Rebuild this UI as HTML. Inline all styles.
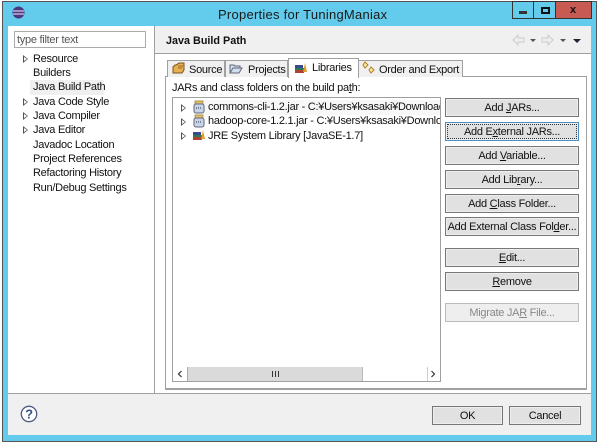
<!DOCTYPE html>
<html><head><meta charset="utf-8"><style>
html,body{margin:0;padding:0;width:600px;height:444px;overflow:hidden;background:#fff}
*{box-sizing:border-box}
#p{position:relative;width:600px;height:444px;font:11px "Liberation Sans","Noto Sans CJK JP",sans-serif;letter-spacing:-.27px;color:#111;filter:blur(.25px)}
.a,.t,.b,.tab,svg{position:absolute}
.t{white-space:nowrap;line-height:14px}
.b{left:445px;width:134px;height:19px;background:#e1e1e1;border:1px solid #777;box-shadow:inset 0 0 0 1px #eee;text-align:center;line-height:18px;white-space:nowrap}
u{text-decoration:underline}
.tab{background:#f0f0f0;border:1px solid #a0a0a0;border-bottom:0;height:17px;top:60px;line-height:16px;white-space:nowrap}
.ar{position:absolute;width:0;height:0;border-left:5px solid #555;border-top:4px solid transparent;border-bottom:4px solid transparent}
.ar:after{content:"";position:absolute;left:-4px;top:-2px;border-left:3px solid #fff;border-top:2px solid transparent;border-bottom:2px solid transparent}
</style></head><body><div id="p">
<div class="a" style="left:2px;top:1px;width:595px;height:441px;background:#63cbec;border:1px solid #555"></div>
<div class="a" style="left:8px;top:26px;width:583px;height:409px;background:#f0f0f0"></div>
<svg style="left:10px;top:4px" width="18" height="18" viewBox="0 0 18 18"><circle cx="8.5" cy="8.5" r="6" fill="#4b3a80"/><path d="M3 7h11M3 10h11" stroke="#d8c8e8" stroke-width="1.2"/></svg>
<div class="t" style="left:218px;top:7px;font-size:13px;line-height:16px;width:170px;letter-spacing:.25px;color:#1a1a1a">Properties for TuningManiax</div>
<div class="a" style="left:512px;top:1px;width:22px;height:18px;border:1px solid #333;background:#63cbec"></div>
<div class="a" style="left:534px;top:1px;width:22px;height:18px;border:1px solid #333;border-left:0;background:#63cbec"></div>
<div class="a" style="left:556px;top:1px;width:36px;height:18px;border:1px solid #333;border-left:0;background:#c75a52"></div>
<div class="a" style="left:519px;top:11px;width:8px;height:3px;background:#333"></div>
<div class="a" style="left:541px;top:7px;width:9px;height:7px;border:2px solid #111"></div>
<div class="t" style="left:570px;top:3px;font-weight:bold;font-size:11px;letter-spacing:0">x</div>

<div class="a" style="left:8px;top:26px;width:146px;height:367px;background:#fff"></div>
<div class="a" style="left:154px;top:26px;width:1px;height:367px;background:#a0a0a0"></div>
<div class="a" style="left:155px;top:53px;width:436px;height:340px;background:#fff"></div>
<div class="a" style="left:155px;top:53px;width:436px;height:1px;background:#a0a0a0"></div>
<div class="a" style="left:8px;top:393px;width:583px;height:1px;background:#a0a0a0"></div>

<div class="a" style="left:14px;top:31px;width:132px;height:17px;background:#fff;border:1px solid #aaa"></div>
<div class="t" style="left:17px;top:33px;color:#555">type filter text</div>
<div class="a" style="left:30px;top:80px;width:74px;height:15px;background:#f0f0f0"></div>
<div class="t" style="left:33px;top:52px">Resource</div>
<div class="t" style="left:33px;top:66px">Builders</div>
<div class="t" style="left:33px;top:80px">Java Build Path</div>
<div class="t" style="left:33px;top:95px">Java Code Style</div>
<div class="t" style="left:33px;top:109px">Java Compiler</div>
<div class="t" style="left:33px;top:123px">Java Editor</div>
<div class="t" style="left:33px;top:138px">Javadoc Location</div>
<div class="t" style="left:33px;top:152px">Project References</div>
<div class="t" style="left:33px;top:166px">Refactoring History</div>
<div class="t" style="left:33px;top:181px">Run/Debug Settings</div>
<i class="ar" style="left:23px;top:55px"></i><i class="ar" style="left:23px;top:98px"></i><i class="ar" style="left:23px;top:112px"></i><i class="ar" style="left:23px;top:126px"></i>

<div class="t" style="left:166px;top:34px;font-weight:bold;font-size:10.8px;letter-spacing:0">Java Build Path</div>
<svg style="left:510px;top:33px" width="75" height="14" viewBox="0 0 75 14"><path d="M3 7l5-5v3h6v4H8v3z" fill="#eee" stroke="#ccc"/><path d="M20 6h6l-3 3zM50 6h6l-3 3z" fill="#555"/><path d="M43 7l-5-5v3h-6v4h6v3z" fill="#eee" stroke="#ccc"/><path d="M63 6h8l-4 4z" fill="#223"/></svg>

<div class="a" style="left:165px;top:76px;width:422px;height:314px;background:#fff;border:1px solid #a0a0a0;border-width:1px 1px 2px 1px"></div>
<div class="tab" style="left:167px;width:58px"><span style="position:absolute;left:21px;top:1px">Source</span></div>
<div class="tab" style="left:225px;width:63px"><span style="position:absolute;left:22px;top:1px">Projects</span></div>
<div class="tab" style="left:358px;width:105px"><span style="position:absolute;left:20px;top:1px">Order and Export</span></div>
<div class="tab" style="left:288px;width:71px;top:58px;height:20px;background:#fff;line-height:17px"><span style="position:absolute;left:23px;top:1px">Libraries</span></div>
<svg style="left:172px;top:62px" width="14" height="13" viewBox="0 0 14 13"><path d="M1 11V5l2-2h1l3-2h5v7l-2 3z" fill="#e8b050" stroke="#7a5020"/><path d="M6 4h5M6 6h4" stroke="#7a5020" stroke-width=".7"/></svg>
<svg style="left:229px;top:62px" width="14" height="13" viewBox="0 0 14 13"><path d="M1 11V3h4l1 1h5v2H4l-3 5h9l3-5H4" fill="#cfe0f0" stroke="#667"/></svg>
<svg style="left:294px;top:61px" width="14" height="13" viewBox="0 0 14 13"><path d="M1 7h9v2H1z" fill="#2a7a5a"/><path d="M1 9h9v3H1z" fill="#b04030"/><path d="M1 4h8v3H1z" fill="#3a4a90"/><path d="M9 11l2-9 2 9z" fill="#e0a030"/></svg>
<svg style="left:362px;top:61px" width="14" height="14" viewBox="0 0 14 14"><path d="M3 1l3 3-3 3-2-3zM9 6l3 3-3 3-2-3z" fill="#f6e8a0" stroke="#b08020"/></svg>

<div class="t" style="left:172px;top:81px">JARs and class folders on the build pa<u>t</u>h:</div>
<div class="a" style="left:172px;top:97px;width:269px;height:285px;background:#fff;border:1px solid #a0a0a0;overflow:hidden">
<div class="a" style="left:20px;top:2px;width:247px;height:15px;background:#f7f7f7"></div>
<div class="t" style="left:35px;top:2px">commons-cli-1.2.jar - C:¥Users¥ksasaki¥Downloads</div>
<div class="t" style="left:35px;top:16px">hadoop-core-1.2.1.jar - C:¥Users¥ksasaki¥Downloads</div>
<div class="t" style="left:35px;top:31px">JRE System Library [JavaSE-1.7]</div>
<i class="ar" style="left:8px;top:6px"></i><i class="ar" style="left:8px;top:20px"></i><i class="ar" style="left:8px;top:34px"></i>
<svg style="left:20px;top:2px" width="12" height="14" viewBox="0 0 12 14"><path d="M2 1h8v3H2z" fill="#e0c070" stroke="#a08030" stroke-width=".7"/><rect x="1" y="4" width="10" height="9" rx="2" fill="#c8d4e8" stroke="#667"/><path d="M3 8h6" stroke="#234" stroke-dasharray="1 1"/></svg>
<svg style="left:20px;top:16px" width="12" height="14" viewBox="0 0 12 14"><path d="M2 1h8v3H2z" fill="#e0c070" stroke="#a08030" stroke-width=".7"/><rect x="1" y="4" width="10" height="9" rx="2" fill="#c8d4e8" stroke="#667"/><path d="M3 8h6" stroke="#234" stroke-dasharray="1 1"/></svg>
<svg style="left:19px;top:30px" width="14" height="13" viewBox="0 0 14 13"><path d="M1 7h9v2H1z" fill="#2a7a5a"/><path d="M1 9h9v3H1z" fill="#b04030"/><path d="M1 4h8v3H1z" fill="#3a4a90"/><path d="M9 11l2-9 2 9z" fill="#e0a030"/></svg>
<div class="a" style="left:1px;top:269px;width:266px;height:14px;background:#fff"></div>
<div class="a" style="left:14px;top:269px;width:176px;height:14px;background:#dadada;border-left:1px solid #aaa;border-right:1px solid #bbb"></div>
<svg style="left:4px;top:272px" width="6" height="8" viewBox="0 0 6 8"><path d="M4.5 1L1.5 4l3 3" fill="none" stroke="#333" stroke-width="1.2"/></svg>
<svg style="left:257px;top:272px" width="6" height="8" viewBox="0 0 6 8"><path d="M1.5 1l3 3-3 3" fill="none" stroke="#333" stroke-width="1.2"/></svg>
<div class="a" style="left:254px;top:269px;width:1px;height:14px;background:#ccc"></div>
<div class="a" style="left:99px;top:273px;width:7px;height:6px;background:repeating-linear-gradient(90deg,#333 0 1px,#dadada 1px 3px)"></div>
</div>

<div class="b" style="top:98px">Add <u>J</u>ARs...</div>
<div class="b" style="top:122px;border-color:#4a90c8;outline:1px dotted #333;outline-offset:-3px">Add E<u>x</u>ternal JARs...</div>
<div class="b" style="top:146px">Add <u>V</u>ariable...</div>
<div class="b" style="top:170px">Add Lib<u>r</u>ary...</div>
<div class="b" style="top:194px">Add <u>C</u>lass Folder...</div>
<div class="b" style="top:217px">Add External Class Fol<u>d</u>er...</div>
<div class="b" style="top:248px"><u>E</u>dit...</div>
<div class="b" style="top:272px"><u>R</u>emove</div>
<div class="b" style="top:303px;color:#888;border-color:#bbb;background:#eee">Migrate JA<u>R</u> File...</div>

<svg style="left:20px;top:405px" width="18" height="18" viewBox="0 0 18 18"><circle cx="9" cy="9" r="7.7" fill="#fff" stroke="#4a5a80" stroke-width="1.3"/><text x="9" y="13.5" text-anchor="middle" font-family="Liberation Sans" font-weight="bold" font-size="13" fill="#34508a">?</text></svg>
<div class="b" style="left:432px;top:406px;width:71px">OK</div>
<div class="b" style="left:509px;top:406px;width:72px">Cancel</div>
</div></body></html>
